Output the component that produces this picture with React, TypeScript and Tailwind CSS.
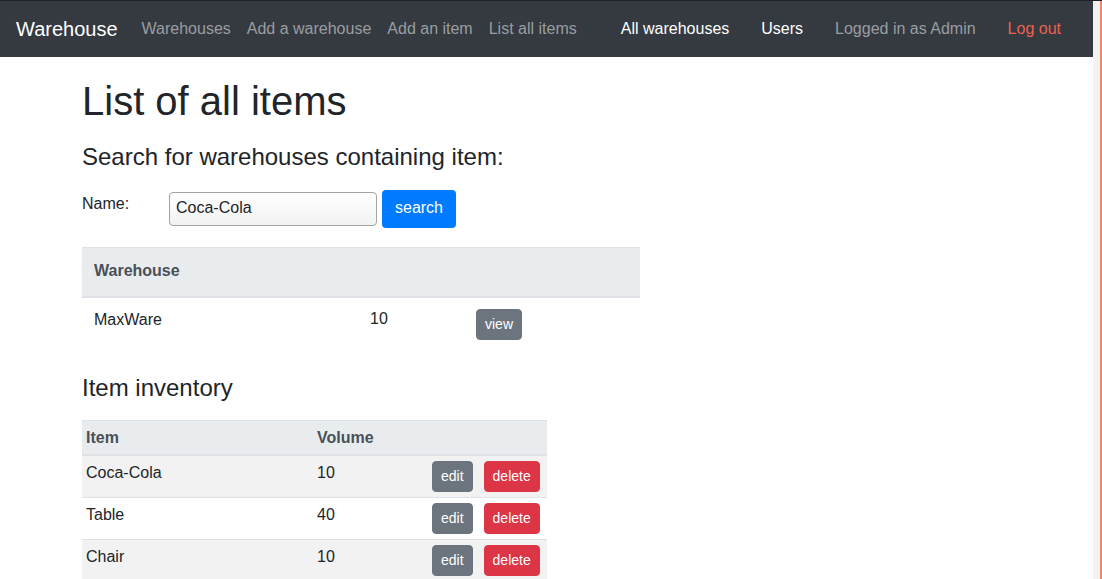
const leftLinks = ['Warehouses', 'Add a warehouse', 'Add an item', 'List all items'];

const items = [
  { name: 'Coca-Cola', volume: 10 },
  { name: 'Table', volume: 40 },
  { name: 'Chair', volume: 10 },
];

function SmallButton({ label, color }: { label: string; color: 'gray' | 'red' }) {
  return (
    <button
      className={
        'h-[31px] px-2 rounded-[4px] border text-[14px] leading-[21px] text-white ' +
        (color === 'gray' ? 'bg-[#6c757d] border-[#6c757d]' : 'bg-[#dc3545] border-[#dc3545]')
      }
    >
      {label}
    </button>
  );
}

export default function App() {
  return (
    <div
      className="flex h-screen w-full overflow-hidden border-t border-[#222222] bg-white text-[#212529]"
      style={{ fontFamily: '"Liberation Sans", Arial, sans-serif' }}
    >
      <div className="flex-1 min-w-0">
        {/* Navbar */}
        <nav className="flex h-[56px] items-center bg-[#343a40] pl-4 pr-4">
          <span className="mr-4 text-[20px] leading-[30px] text-white">Warehouse</span>
          <div className="flex items-center">
            {leftLinks.map((l) => (
              <a key={l} className="px-2 text-base leading-6 text-[#9a9da0]">
                {l}
              </a>
            ))}
          </div>
          <div className="ml-auto flex items-center">
            <a className="px-4 text-base leading-6 text-white">All warehouses</a>
            <a className="px-4 text-base leading-6 text-white">Users</a>
            <span className="px-4 text-base leading-6 text-[#9a9da0]">Logged in as Admin</span>
            <a className="px-4 text-base leading-6 text-[#f0604e]">Log out</a>
          </div>
        </nav>

        {/* Content */}
        <main className="pl-[82px]">
          <h1 className="mt-[20px] text-[40px] leading-[48px]">List of all items</h1>
          <h4 className="mt-[18px] text-[24px] leading-[28.8px]">Search for warehouses containing item:</h4>

          {/* Search form */}
          <div className="mt-[18px] flex items-start">
            <label className="w-[87px] pt-[2px] text-base leading-6">Name:</label>
            <input
              readOnly
              value="Coca-Cola"
              className="mt-[2px] h-[34px] w-[208px] rounded-[4px] border border-[#a3a3a3] bg-gradient-to-b from-white to-[#f2f2f2] px-[6px] pb-[1px] text-base text-[#212529] outline-none"
            />
            <button className="ml-[5px] h-[38px] w-[74px] rounded-[4px] bg-[#007bff] pb-[1px] text-base text-white">
              search
            </button>
          </div>

          {/* Warehouses table */}
          <div className="mt-[19px] w-[558px]">
            <div className="border-t border-b-2 border-[#dee2e6] bg-[#e9ecef] px-3 pt-[11px] pb-[13px]">
              <span className="text-base font-bold leading-6 text-[#495057]">Warehouse</span>
            </div>
            <div className="grid h-[52px] grid-cols-[276px_106px_176px]">
              <div className="px-3 pt-[10px] leading-6">MaxWare</div>
              <div className="px-3 pt-[9px] leading-6">10</div>
              <div className="px-3 pt-[11px]">
                <button className="h-[31px] rounded-[4px] border border-[#6c757d] bg-[#6c757d] px-2 text-[14px] leading-[21px] text-white">
                  view
                </button>
              </div>
            </div>
          </div>

          <h4 className="mt-[24px] text-[24px] leading-[28.8px]">Item inventory</h4>

          {/* Inventory table */}
          <div className="mt-[17px] w-[465px]">
            <div className="grid grid-cols-[230px_115px_120px] border-t border-b-2 border-[#dee2e6] bg-[#e9ecef] font-bold text-[#495057]">
              <div className="px-[4px] pt-[5px] pb-[4px] leading-6">Item</div>
              <div className="px-[5px] pt-[5px] pb-[4px] leading-6">Volume</div>
              <div />
            </div>
            {items.map((it, i) => (
              <div
                key={it.name}
                className={
                  'grid grid-cols-[230px_115px_120px] ' +
                  (i > 0 ? 'border-t border-[#dee2e6] ' : '') +
                  (i % 2 === 0 ? 'bg-[#f2f2f2]' : 'bg-white')
                }
              >
                <div className="px-[4px] pt-[5px] leading-6">{it.name}</div>
                <div className="px-[5px] pt-[5px] leading-6">{it.volume}</div>
                <div className="flex gap-[11px] px-[5px] py-[5px]">
                  <SmallButton label="edit" color="gray" />
                  <SmallButton label="delete" color="red" />
                </div>
              </div>
            ))}
          </div>
        </main>
      </div>

      {/* Right edge strip */}
      <div className="w-[7px] bg-[#f3f2f1]" />
      <div className="w-[2px] bg-[#ef8a5f]" />
    </div>
  );
}
